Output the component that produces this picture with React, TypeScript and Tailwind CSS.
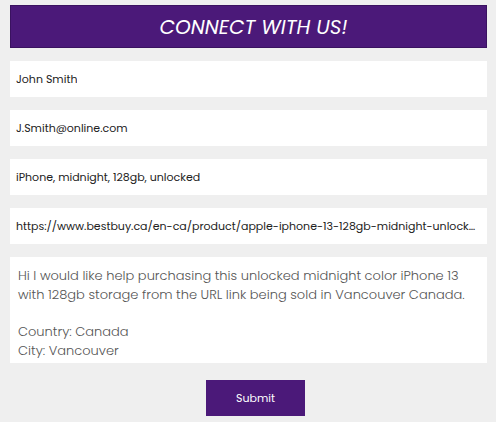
import React from "react";

const font = { fontFamily: "Poppins, 'Open Sans', sans-serif" };

function Field({ children }: { children: React.ReactNode }) {
  return (
    <div className="h-[36px] bg-white flex items-center pl-[6px] pr-[6px] text-[11px] text-[#222] whitespace-nowrap overflow-hidden">
      <span className="truncate">{children}</span>
    </div>
  );
}

export default function App() {
  return (
    <div className="w-[496px] h-[422px] bg-[#efefef] pt-[5px] pl-[10px] pr-[9px] flex flex-col" style={font}>
      <div className="h-[43px] bg-[#4b1979] border border-[#3a1260] flex items-center justify-center">
        <span className="text-white italic text-[20px] pl-[10px]">CONNECT WITH US!</span>
      </div>
      <div className="mt-[13px] flex flex-col gap-[13px]">
        <Field>John Smith</Field>
        <Field>J.Smith@online.com</Field>
        <Field>iPhone, midnight, 128gb, unlocked</Field>
        <Field>https://www.bestbuy.ca/en-ca/product/apple-iphone-13-128gb-midnight-unlocked/15768453</Field>
      </div>
      <div className="mt-[13px] h-[106px] bg-white pl-[8px] pr-[6px] pt-[10px] text-[13px] leading-[18.75px] text-[#555] font-light overflow-hidden whitespace-nowrap">
        <div>Hi I would like help purchasing this unlocked midnight color iPhone 13</div>
        <div>with 128gb storage from the URL link being sold in Vancouver Canada.</div>
        <div>&nbsp;</div>
        <div>Country: Canada</div>
        <div>City: Vancouver</div>
      </div>
      <div className="mt-[17px] flex justify-center">
        <button className="w-[99px] h-[36px] bg-[#4b1979] text-white text-[11px] ml-[14px]">Submit</button>
      </div>
    </div>
  );
}
